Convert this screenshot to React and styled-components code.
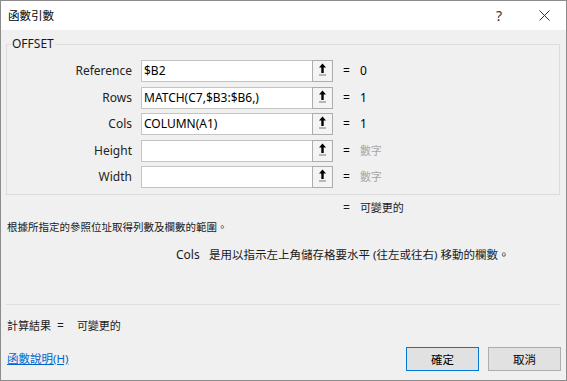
import React from 'react';
import styled, { createGlobalStyle } from 'styled-components';

const Global = createGlobalStyle`
  html, body { margin: 0; padding: 0; background: #f0f0f0; }
  body { font-family: "Noto Sans", "Noto Sans CJK TC", sans-serif; }
`;

const Window = styled.div`
  box-sizing: border-box;
  width: 567px;
  height: 381px;
  border: 1px solid #8c8c8c;
  background: #f0f0f0;
  display: flex;
  flex-direction: column;
  font-family: "Noto Sans", "Noto Sans CJK TC", sans-serif;
  font-size: 12px;
  line-height: 16px;
  color: #1a1a1a;
  overflow: hidden;
`;

const Cjk = styled.span`
  font-size: ${p => p.$size || 11}px;
  color: ${p => (p.$muted ? '#a6a6a6' : 'inherit')};
`;

const TitleBar = styled.div`
  flex-shrink: 0;
  height: 29px;
  background: #ffffff;
  display: flex;
  align-items: center;
  padding-left: 7px;
`;

const Title = styled.div`
  font-size: 11.5px;
  color: #000;
`;

const TitleButton = styled.div`
  height: 29px;
  width: ${p => p.$w}px;
  display: flex;
  align-items: center;
  justify-content: center;
  color: #333;
  font-size: 14px;
  margin-left: ${p => (p.$first ? 'auto' : '0')};
`;

const Group = styled.div`
  position: relative;
  margin: 14px 6px 0 5px;
  border: 1px solid #dcdcdc;
  padding: 15px 0 6px 0;
  display: grid;
  grid-template-columns: 125px 192px 1fr;
  column-gap: 9px;
  row-gap: 4.5px;
  align-items: center;
`;

const Legend = styled.span`
  position: absolute;
  top: -9px;
  left: 4px;
  padding: 0 1px;
  background: #f0f0f0;
  color: #1a1a1a;
`;

const Label = styled.div`
  text-align: right;
  color: #222;
`;

const Field = styled.div`
  box-sizing: border-box;
  display: flex;
  height: 22px;
  border: 1px solid #c4c4c4;
  background: #ffffff;
`;

const FieldText = styled.div`
  flex: 1;
  padding-left: 2px;
  line-height: 20px;
  color: #000;
  white-space: nowrap;
  overflow: hidden;
`;

const RefButton = styled.div`
  box-sizing: border-box;
  width: 21px;
  height: 22px;
  margin: -1px -1px -1px 0;
  border: 1px solid #adadad;
  background: #f4f4f4;
  display: flex;
  justify-content: center;
  align-items: flex-start;
  padding-top: 2px;
`;

const Result = styled.div`
  display: flex;
  gap: 10px;
  padding-left: 1px;
  color: #000;
`;

const EqRow = styled.div`
  margin-top: 5px;
  padding-left: 342px;
  display: flex;
  gap: 10px;
`;

const Desc = styled.div`
  margin-top: 3px;
  padding-left: 6px;
  color: #1a1a1a;
`;

const ParamLine = styled.div`
  margin-top: 12px;
  padding-left: 175px;
  display: flex;
`;

const ParamName = styled.span`
  width: 33px;
`;

const Separator = styled.div`
  margin: 41px 6px 0 5px;
  height: 1px;
  background: #dedede;
`;

const Outcome = styled.div`
  margin-top: 13px;
  padding-left: 6px;
  display: flex;
`;

const OutcomeEq = styled.span`
  margin-left: 6px;
  margin-right: 13px;
`;

const Footer = styled.div`
  margin-top: auto;
  padding: 0 5px 9px 6px;
  display: flex;
  align-items: center;
`;

const HelpLink = styled.a`
  color: #0066cc;
  font-size: 11.5px;
  text-decoration: underline;
  cursor: pointer;
`;

const Buttons = styled.div`
  margin-left: auto;
  display: flex;
  gap: 9px;
`;

const Button = styled.button`
  box-sizing: border-box;
  width: 73px;
  height: 24px;
  margin: 0;
  padding: 0;
  font-family: "Noto Sans", "Noto Sans CJK TC", sans-serif;
  font-size: 11.5px;
  color: #000;
  background: #e1e1e1;
  border: 1px solid ${p => (p.$primary ? '#0078d7' : '#adadad')};
  border-radius: 0;
`;

const ArrowIcon = () => (
  <svg width="7" height="13" viewBox="0 0 7 13">
    <polygon points="0,4.5 3.5,0.5 7,4.5" fill="#000" />
    <rect x="2.3" y="4" width="2.4" height="6" fill="#000" />
    <rect x="0" y="11.5" width="7" height="1" fill="#7a7a7a" />
  </svg>
);

const CloseIcon = () => (
  <svg width="11" height="11" viewBox="0 0 11 11">
    <path d="M0.5 0.5 L10.5 10.5 M10.5 0.5 L0.5 10.5" stroke="#333" strokeWidth="1" fill="none" />
  </svg>
);

const rows = [
  { label: 'Reference', text: '$B2', value: '0' },
  { label: 'Rows', text: 'MATCH(C7,$B3:$B6,)', value: '1' },
  { label: 'Cols', text: 'COLUMN(A1)', value: '1' },
  { label: 'Height', text: '', value: '數字', muted: true },
  { label: 'Width', text: '', value: '數字', muted: true },
];

export default function App() {
  return (
    <>
      <Global />
      <Window>
        <TitleBar>
          <Title>函數引數</Title>
          <TitleButton $w={46} $first>?</TitleButton>
          <TitleButton $w={44}><CloseIcon /></TitleButton>
        </TitleBar>

        <Group>
          <Legend>OFFSET</Legend>
          {rows.map(r => (
            <React.Fragment key={r.label}>
              <Label>{r.label}</Label>
              <Field>
                <FieldText>{r.text}</FieldText>
                <RefButton><ArrowIcon /></RefButton>
              </Field>
              <Result>
                <span>=</span>
                {r.muted ? <Cjk $muted>{r.value}</Cjk> : <span>{r.value}</span>}
              </Result>
            </React.Fragment>
          ))}
        </Group>

        <EqRow>
          <span>=</span>
          <Cjk>可變更的</Cjk>
        </EqRow>

        <Desc><Cjk $size={10.5}>根據所指定的參照位址取得列數及欄數的範圍。</Cjk></Desc>

        <ParamLine>
          <ParamName>Cols</ParamName>
          <Cjk $size={11.5}>是用以指示左上角儲存格要水平 (往左或往右) 移動的欄數。</Cjk>
        </ParamLine>

        <Separator />

        <Outcome>
          <Cjk>計算結果</Cjk>
          <OutcomeEq>=</OutcomeEq>
          <Cjk>可變更的</Cjk>
        </Outcome>

        <Footer>
          <HelpLink>函數說明(H)</HelpLink>
          <Buttons>
            <Button $primary>確定</Button>
            <Button>取消</Button>
          </Buttons>
        </Footer>
      </Window>
    </>
  );
}
